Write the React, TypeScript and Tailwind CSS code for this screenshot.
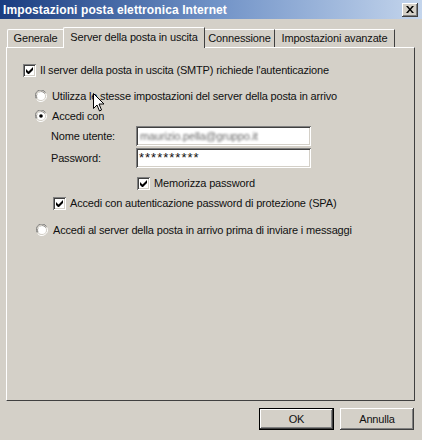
import React from "react";

const raised =
  "shadow-[inset_-1px_-1px_#404040,inset_1px_1px_#ffffff,inset_-2px_-2px_#808080,inset_2px_2px_#d4d0c8]";
const sunken =
  "shadow-[inset_1px_1px_#808080,inset_-1px_-1px_#ffffff,inset_2px_2px_#404040,inset_-2px_-2px_#d4d0c8]";

const Check = ({ checked }: { checked?: boolean }) => (
  <div className={`flex h-[13px] w-[13px] shrink-0 items-center justify-center bg-white ${sunken}`}>
    {checked && (
      <svg width="7" height="7" viewBox="0 0 7 7">
        <path d="M0 2v3l2 2h1l4-4V0L2.5 4.5z" fill="#000" />
      </svg>
    )}
  </div>
);

const Radio = ({ checked }: { checked?: boolean }) => (
  <svg width="12" height="12" viewBox="0 0 12 12" className="shrink-0">
    <path d="M10.5 2.5A5.5 5.5 0 0 0 1.2 8.5" stroke="#808080" fill="none" />
    <path d="M9.6 3.4A4.5 4.5 0 0 0 2.2 8" stroke="#404040" fill="none" />
    <circle cx="6" cy="6" r="4" fill="#fff" />
    <path d="M1.6 9.4A5.5 5.5 0 0 0 10.8 3.5" stroke="#ffffff" fill="none" />
    {checked && <circle cx="6" cy="6" r="1.8" fill="#000" />}
  </svg>
);

const Cursor = () => (
  <svg
    width="12"
    height="20"
    viewBox="0 0 12 20"
    className="pointer-events-none absolute left-[93px] top-[93px]"
  >
    <path
      d="M0.5 0.5v15l3.5-3.5 2.5 6 2-1-2.5-6h5z"
      fill="#fff"
      stroke="#000"
      strokeLinejoin="miter"
    />
  </svg>
);

export default function App() {
  return (
    <div className="relative flex h-[440px] w-[422px] flex-col overflow-hidden bg-[#d4d0c8] font-['Tahoma','Liberation_Sans',sans-serif] text-[11px] leading-none tracking-[-0.17px] text-[#111]">
      {/* Title bar */}
      <div className="flex h-[19px] shrink-0 items-center justify-between bg-gradient-to-r from-[#1a3c80] via-[#6f91c6] to-[#c4d5ec] pl-[3px] pr-[4px]">
        <span className="text-[12px] font-bold tracking-[0.1px] text-white">
          Impostazioni posta elettronica Internet
        </span>
        <div className={`flex h-[14px] w-[16px] items-center justify-center bg-[#d4d0c8] ${raised}`}>
          <svg width="8" height="7" viewBox="0 0 8 7">
            <path d="M0 0h2l2 2.5L6 0h2L5 3.5 8 7H6L4 4.5 2 7H0l3-3.5z" fill="#000" />
          </svg>
        </div>
      </div>

      <div className="flex flex-1 flex-col pl-[6px] pr-[7px] pt-[8px]">
        {/* Tabs */}
        <div className="flex h-[20px] items-end pl-[1px]">
          <div className="flex h-[18px] w-[56px] items-center justify-center rounded-tl-[2px] border-l border-t border-white">
            Generale
          </div>
          <div className="relative z-10 -mb-px flex h-[21px] w-[142px] items-start justify-center rounded-tl-[2px] border-l border-r border-t border-l-white border-r-[#404040] border-t-white bg-[#d4d0c8] pt-[4px]">
            Server della posta in uscita
          </div>
          <div className="flex h-[18px] w-[70px] items-center justify-center border-r border-t border-r-[#404040] border-t-white">
            Connessione
          </div>
          <div className="flex h-[18px] w-[120px] items-center justify-center border-r border-t border-r-[#404040] border-t-white">
            Impostazioni avanzate
          </div>
        </div>

        {/* Panel */}
        <div className="relative h-[354px] border-b border-l border-r border-t border-b-[#404040] border-l-white border-r-[#404040] border-t-white pl-[15px] pt-[16px]">
          <div className="flex h-[13px] items-center gap-[4px] pl-[1px]">
            <Check checked />
            <span>Il server della posta in uscita (SMTP) richiede l'autenticazione</span>
          </div>

          <div className="pl-[13px]">
            <div className="mt-[13px] flex h-[12px] items-center gap-[5px]">
              <Radio />
              <span>Utilizza le stesse impostazioni del server della posta in arrivo</span>
            </div>
            <div className="mt-[8px] flex h-[12px] items-center gap-[5px]">
              <Radio checked />
              <span>Accedi con</span>
            </div>

            <div className="pl-[16px]">
              <div className="mt-[4px] flex h-[20px] items-center">
                <span className="w-[85px]">Nome utente:</span>
                <div className={`flex h-[20px] w-[175px] items-center bg-white px-[4px] ${sunken}`}>
                  <span className="select-none text-[#6a6a6a] blur-[0.9px]">maurizio.pella@gruppo.it</span>
                </div>
              </div>
              <div className="mt-[2px] flex h-[20px] items-center">
                <span className="w-[85px]">Password:</span>
                <div className={`flex h-[20px] w-[175px] items-start bg-white pl-[3px] pt-[3px] ${sunken}`}>
                  <span className="text-[13px] leading-[14px] tracking-[1px]">**********</span>
                </div>
              </div>
              <div className="mt-[9px] flex h-[13px] items-center gap-[4px] pl-[86px]">
                <Check checked />
                <span>Memorizza password</span>
              </div>
              <div className="mt-[7px] flex h-[13px] items-center gap-[4px] pl-[2px]">
                <Check checked />
                <span>Accedi con autenticazione password di protezione (SPA)</span>
              </div>
            </div>
          </div>

          <div className="mt-[14px] flex h-[12px] items-center gap-[5px] pl-[14px]">
            <Radio />
            <span>Accedi al server della posta in arrivo prima di inviare i messaggi</span>
          </div>
        </div>

        {/* Buttons */}
        <div className="mt-[7px] flex justify-end gap-[6px] pr-[1px]">
          <div className="flex h-[22px] w-[75px] items-center justify-center border border-black bg-[#d4d0c8] shadow-[inset_-1px_-1px_#404040,inset_1px_1px_#ffffff,inset_-2px_-2px_#808080]">
            OK
          </div>
          <div className={`flex h-[22px] w-[74px] items-center justify-center bg-[#d4d0c8] ${raised}`}>
            Annulla
          </div>
        </div>
      </div>

      <Cursor />
    </div>
  );
}
